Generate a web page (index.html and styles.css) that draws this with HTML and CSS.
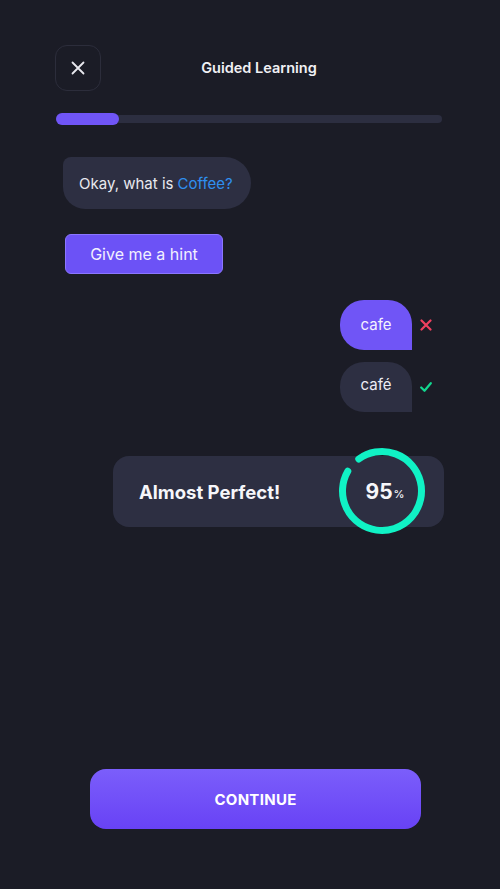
FILE: index.html
```html
<!DOCTYPE html>
<html>
<head>
<meta charset="utf-8">
<link rel="stylesheet" href="styles.css">
</head>
<body>
<div class="screen">
  <header class="top">
    <button class="close" aria-label="Close">
      <svg width="16" height="16" viewBox="0 0 16 16"><path d="M2.5 2.5 L13.5 13.5 M13.5 2.5 L2.5 13.5" stroke="#e8e8ee" stroke-width="1.8" stroke-linecap="round"/></svg>
    </button>
    <div class="title">Guided Learning</div>
  </header>
  <div class="progress"><div class="fill"></div></div>

  <div class="chat">
    <div class="bot-bubble">Okay, what is <span class="word">Coffee?</span></div>
    <button class="hint">Give me a hint</button>

    <div class="answer">
      <div class="ububble wrong">cafe</div>
      <svg class="mark" width="12" height="12" viewBox="0 0 12 12"><path d="M1.5 1.5 L10.5 10.5 M10.5 1.5 L1.5 10.5" stroke="#f0405f" stroke-width="2.2" stroke-linecap="round"/></svg>
    </div>
    <div class="answer">
      <div class="ububble right">café</div>
      <svg class="mark" width="12" height="12" viewBox="0 0 12 12"><path d="M1.2 6.5 L4.5 9.8 L10.8 2.2" fill="none" stroke="#12d68e" stroke-width="2.2" stroke-linecap="round" stroke-linejoin="round"/></svg>
    </div>
  </div>

  <div class="result">
    <div class="result-text">Almost Perfect!</div>
    <div class="ring">
      <svg width="90" height="90" viewBox="0 0 90 90">
        <path d="M 21.78 13.04 A 39.5 39.5 0 1 1 10.79 25.25" fill="none" stroke="#10f2c5" stroke-width="7" stroke-linecap="round"/>
      </svg>
      <div class="score">95<span class="pct">%</span></div>
    </div>
  </div>

  <div class="spacer"></div>
  <button class="continue">CONTINUE</button>
</div>
</body>
</html>
```
FILE: styles.css
```css
* { box-sizing: border-box; }
html, body { margin: 0; padding: 0; }
body {
  background: #1b1c26;
  font-family: "Inter", "Open Sans", sans-serif;
  color: #f2f2f6;
  width: 500px;
  height: 889px;
  overflow: hidden;
}
.screen {
  display: flex;
  flex-direction: column;
  height: 889px;
  padding: 45px 58px 60px 55px;
}
.top {
  position: relative;
  display: flex;
  align-items: center;
  height: 46px;
}
.close {
  width: 46px;
  height: 46px;
  border-radius: 12px;
  border: 1.5px solid #2c2d3b;
  background: transparent;
  display: flex;
  align-items: center;
  justify-content: center;
  padding: 0;
}
.title {
  position: absolute;
  left: 0; right: 0;
  top: 14px;
  text-align: center;
  padding-left: 21px;
  font-size: 14.5px;
  font-weight: 600;
  color: #f0f0f4;
}
.progress {
  margin-top: 22px;
  margin-left: 1px;
  height: 12px;
  display: flex;
  align-items: center;
  position: relative;
}
.progress::before {
  content: "";
  position: absolute;
  left: 0; right: 0;
  top: 2px;
  height: 8px;
  border-radius: 4px;
  background: #2c2e40;
}
.fill {
  position: relative;
  width: 63px;
  height: 12px;
  border-radius: 6px;
  background: #7055f6;
}
.chat {
  display: flex;
  flex-direction: column;
  margin-top: 32px;
}
.bot-bubble {
  align-self: flex-start;
  margin-left: 8px;
  height: 52px;
  padding: 0 18px 0 16px;
  display: flex;
  align-items: center;
  background: #2d2f42;
  border-radius: 8px 26px 26px 22px;
  font-size: 15px;
  color: #e9e9ef;
}
.word { color: #2f8ff0; margin-left: 4px; }
.hint {
  align-self: flex-start;
  margin-top: 25px;
  margin-left: 10px;
  height: 40px;
  width: 158px;
  border-radius: 6px;
  border: 1px solid #8b76ff;
  background: #6c52f6;
  color: #f2f0ff;
  font-family: inherit;
  font-size: 16px;
  font-weight: 400;
  padding: 0;
}
.answer {
  align-self: flex-end;
  display: flex;
  align-items: center;
  gap: 8px;
  margin-top: 26px;
  margin-right: 10px;
}
.answer + .answer { margin-top: 12px; }
.ububble {
  width: 72px;
  height: 50px;
  display: flex;
  align-items: center;
  justify-content: center;
  border-radius: 24px 24px 0 24px;
  font-size: 15px;
  padding-bottom: 2px;
}
.wrong { background: #7055f6; color: #f4f2ff; }
.right { background: #2d2f42; color: #ececf2; padding-bottom: 6px; }
.mark { display: block; }
.result {
  margin-top: 44px;
  margin-left: 58px;
  margin-right: -2px;
  height: 71px;
  background: #2d2f42;
  border-radius: 16px;
  display: flex;
  align-items: center;
  justify-content: space-between;
  padding: 0 17px 0 26px;
}
.result-text {
  font-size: 18.5px;
  font-weight: 700;
  color: #f6f6fa;
}
.ring {
  position: relative;
  width: 90px;
  height: 90px;
  margin-top: -2px;
}
.ring svg { display: block; }
.score {
  position: absolute;
  inset: 0;
  display: flex;
  align-items: center;
  justify-content: center;
  font-size: 21px;
  font-weight: 700;
  color: #f6f6fa;
  padding-top: 1px;
  padding-left: 6px;
}
.pct {
  font-size: 11px;
  font-weight: 500;
  margin-top: 6px;
  margin-left: 1px;
}
.spacer { flex: 1; }
.continue {
  margin-left: 35px;
  margin-right: 21px;
  height: 60px;
  border-radius: 16px;
  border: none;
  background: linear-gradient(180deg, #7b5efb 0%, #6842f5 100%);
  color: #ffffff;
  font-family: inherit;
  font-size: 15px;
  font-weight: 700;
  letter-spacing: 0.3px;
}
```
